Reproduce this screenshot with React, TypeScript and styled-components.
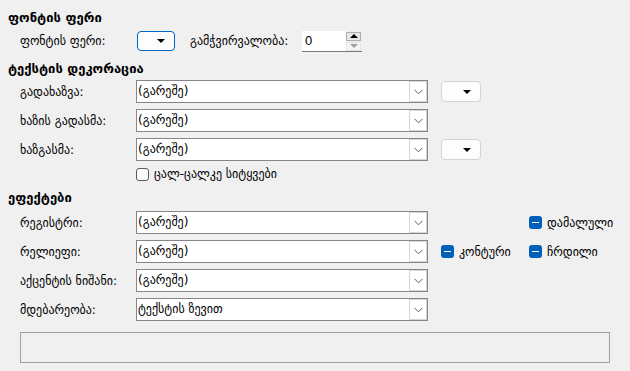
import React from "react";
import styled, { createGlobalStyle } from "styled-components";

const Global = createGlobalStyle`
  html, body { margin: 0; padding: 0; background: #f0f0f0; }
  body { font-family: "DejaVu Sans", "Noto Sans", sans-serif; font-size: 12px; color: #000; }
  * { box-sizing: border-box; }
`;

const Page = styled.div`
  width: 630px;
  height: 371px;
  padding: 9px 0 0 8px;
  display: flex;
  flex-direction: column;
  background: #f0f0f0;
`;

const Heading = styled.div<{ $mt?: number }>`
  height: 18px;
  line-height: 18px;
  font-weight: bold;
  font-size: 13px;
  margin-top: ${(p) => p.$mt ?? 0}px;
  white-space: nowrap;
`;

const FontRow = styled.div`
  margin-top: 4px;
  height: 20px;
  display: flex;
  align-items: center;
  padding-left: 12px;
`;

const Label = styled.span<{ $w?: number; $pl?: number }>`
  grid-column: 1;
  white-space: nowrap;
  width: ${(p) => (p.$w ? `${p.$w}px` : "auto")};
  padding-left: ${(p) => p.$pl ?? 0}px;
  flex: none;
`;

const ColorButton = styled.div<{ $focused?: boolean }>`
  width: ${(p) => (p.$focused ? 38 : 40)}px;
  height: ${(p) => (p.$focused ? 20 : 21)}px;
  border: 1px solid ${(p) => (p.$focused ? "#0067c0" : "#d3d3d3")};
  border-radius: 4px;
  background: #fdfdfd;
  display: flex;
  align-items: center;
  justify-content: flex-end;
  padding-right: 9px;
  flex: none;
`;

const Triangle = styled.span`
  width: 0;
  height: 0;
  border-left: 4.5px solid transparent;
  border-right: 4.5px solid transparent;
  border-top: 4.5px solid #000;
`;

const Spin = styled.div`
  width: 60px;
  height: 21px;
  display: flex;
  background: #fff;
  border-bottom: 1px solid #7a7a7a;
  flex: none;
`;

const SpinText = styled.div`
  flex: 1;
  padding-left: 3px;
  line-height: 20px;
  font-size: 13px;
  font-family: "Liberation Sans", "DejaVu Sans", sans-serif;
`;

const SpinButtons = styled.div`
  width: 16px;
  display: flex;
  flex-direction: column;
  padding: 1px 1px 0 0;
  gap: 1px;
  background: #f0f0f0;
`;

const SpinBtn = styled.div<{ $disabled?: boolean }>`
  flex: 1;
  border: 1px solid ${(p) => (p.$disabled ? "#e3e3e3" : "#adadad")};
  background: ${(p) => (p.$disabled ? "#f4f4f4" : "#e8e8e8")};
  display: flex;
  align-items: center;
  justify-content: center;
`;

const SpinArrow = styled.span<{ $up?: boolean; $disabled?: boolean }>`
  width: 0;
  height: 0;
  border-left: 4px solid transparent;
  border-right: 4px solid transparent;
  ${(p) =>
    p.$up
      ? `border-bottom: 4px solid ${p.$disabled ? "#a0a0a0" : "#000"};`
      : `border-top: 4px solid ${p.$disabled ? "#a0a0a0" : "#000"};`}
`;

const FormGrid = styled.div<{ $mt: number }>`
  margin-top: ${(p) => p.$mt}px;
  padding-left: 12px;
  display: grid;
  grid-template-columns: 116px 292px 13px 88px auto;
  grid-auto-rows: 23px;
  row-gap: 6px;
  align-items: center;
`;

const Combo = styled.div`
  grid-column: 2;
  height: 23px;
  border: 1px solid #868686;
  background: #fff;
  display: flex;
  align-items: stretch;
`;

const ComboText = styled.div`
  flex: 1;
  padding-left: 1px;
  line-height: 21px;
  white-space: nowrap;
`;

const ComboButton = styled.div`
  width: 18px;
  border: 1px solid #d6d6d6;
  background: #fff;
  display: flex;
  align-items: center;
  justify-content: center;
`;

const Cell = styled.div<{ $col: number }>`
  grid-column: ${(p) => p.$col};
  display: flex;
  align-items: center;
  gap: 5px;
  white-space: nowrap;
`;

const CheckRow = styled.div`
  margin-top: 4px;
  height: 18px;
  padding-left: 128px;
  display: flex;
  align-items: center;
  gap: 5px;
`;

const CheckBox = styled.span`
  width: 13px;
  height: 13px;
  border: 1px solid #5a5a5a;
  border-radius: 3px;
  background: #fdfdfd;
  flex: none;
`;

const TriBox = styled.span`
  width: 13px;
  height: 13px;
  border-radius: 3px;
  background: #005fb8;
  display: flex;
  align-items: center;
  justify-content: center;
  flex: none;
  &::after {
    content: "";
    width: 7px;
    height: 1.5px;
    background: #fff;
  }
`;

const Preview = styled.div`
  margin: 11px 0 0 12px;
  width: 590px;
  height: 31px;
  border: 1px solid #a0a0a0;
  background: #f0f0f0;
`;

const Chevron = () => (
  <svg width="9" height="6" viewBox="0 0 9 6">
    <path d="M0.5 0.8 L4.5 4.8 L8.5 0.8" fill="none" stroke="#606060" strokeWidth="1" />
  </svg>
);

const ComboBox = ({ value }: { value: string }) => (
  <Combo>
    <ComboText>{value}</ComboText>
    <ComboButton>
      <Chevron />
    </ComboButton>
  </Combo>
);

const Swatch = () => (
  <Cell $col={4}>
    <ColorButton>
      <Triangle />
    </ColorButton>
  </Cell>
);

export default function App() {
  return (
    <Page>
      <Global />
      <Heading>ფონტის ფერი</Heading>
      <FontRow>
        <Label $w={117}>ფონტის ფერი:</Label>
        <ColorButton $focused>
          <Triangle />
        </ColorButton>
        <Label $w={127} $pl={15}>გამჭვირვალობა:</Label>
        <Spin>
          <SpinText>0</SpinText>
          <SpinButtons>
            <SpinBtn>
              <SpinArrow $up />
            </SpinBtn>
            <SpinBtn $disabled>
              <SpinArrow $disabled />
            </SpinBtn>
          </SpinButtons>
        </Spin>
      </FontRow>

      <Heading $mt={9}>ტექსტის დეკორაცია</Heading>
      <FormGrid $mt={2}>
        <Label>გადახაზვა:</Label>
        <ComboBox value="(გარეშე)" />
        <Swatch />
        <Label>ხაზის გადასმა:</Label>
        <ComboBox value="(გარეშე)" />
        <Label>ხაზგასმა:</Label>
        <ComboBox value="(გარეშე)" />
        <Swatch />
      </FormGrid>
      <CheckRow>
        <CheckBox />
        <span>ცალ-ცალკე სიტყვები</span>
      </CheckRow>

      <Heading $mt={6}>ეფექტები</Heading>
      <FormGrid $mt={4}>
        <Label>რეგისტრი:</Label>
        <ComboBox value="(გარეშე)" />
        <Cell $col={5}>
          <TriBox />
          <span>დამალული</span>
        </Cell>
        <Label>რელიეფი:</Label>
        <ComboBox value="(გარეშე)" />
        <Cell $col={4}>
          <TriBox />
          <span>კონტური</span>
        </Cell>
        <Cell $col={5}>
          <TriBox />
          <span>ჩრდილი</span>
        </Cell>
        <Label>აქცენტის ნიშანი:</Label>
        <ComboBox value="(გარეშე)" />
        <Label>მდებარეობა:</Label>
        <ComboBox value="ტექსტის ზევით" />
      </FormGrid>
      <Preview />
    </Page>
  );
}
